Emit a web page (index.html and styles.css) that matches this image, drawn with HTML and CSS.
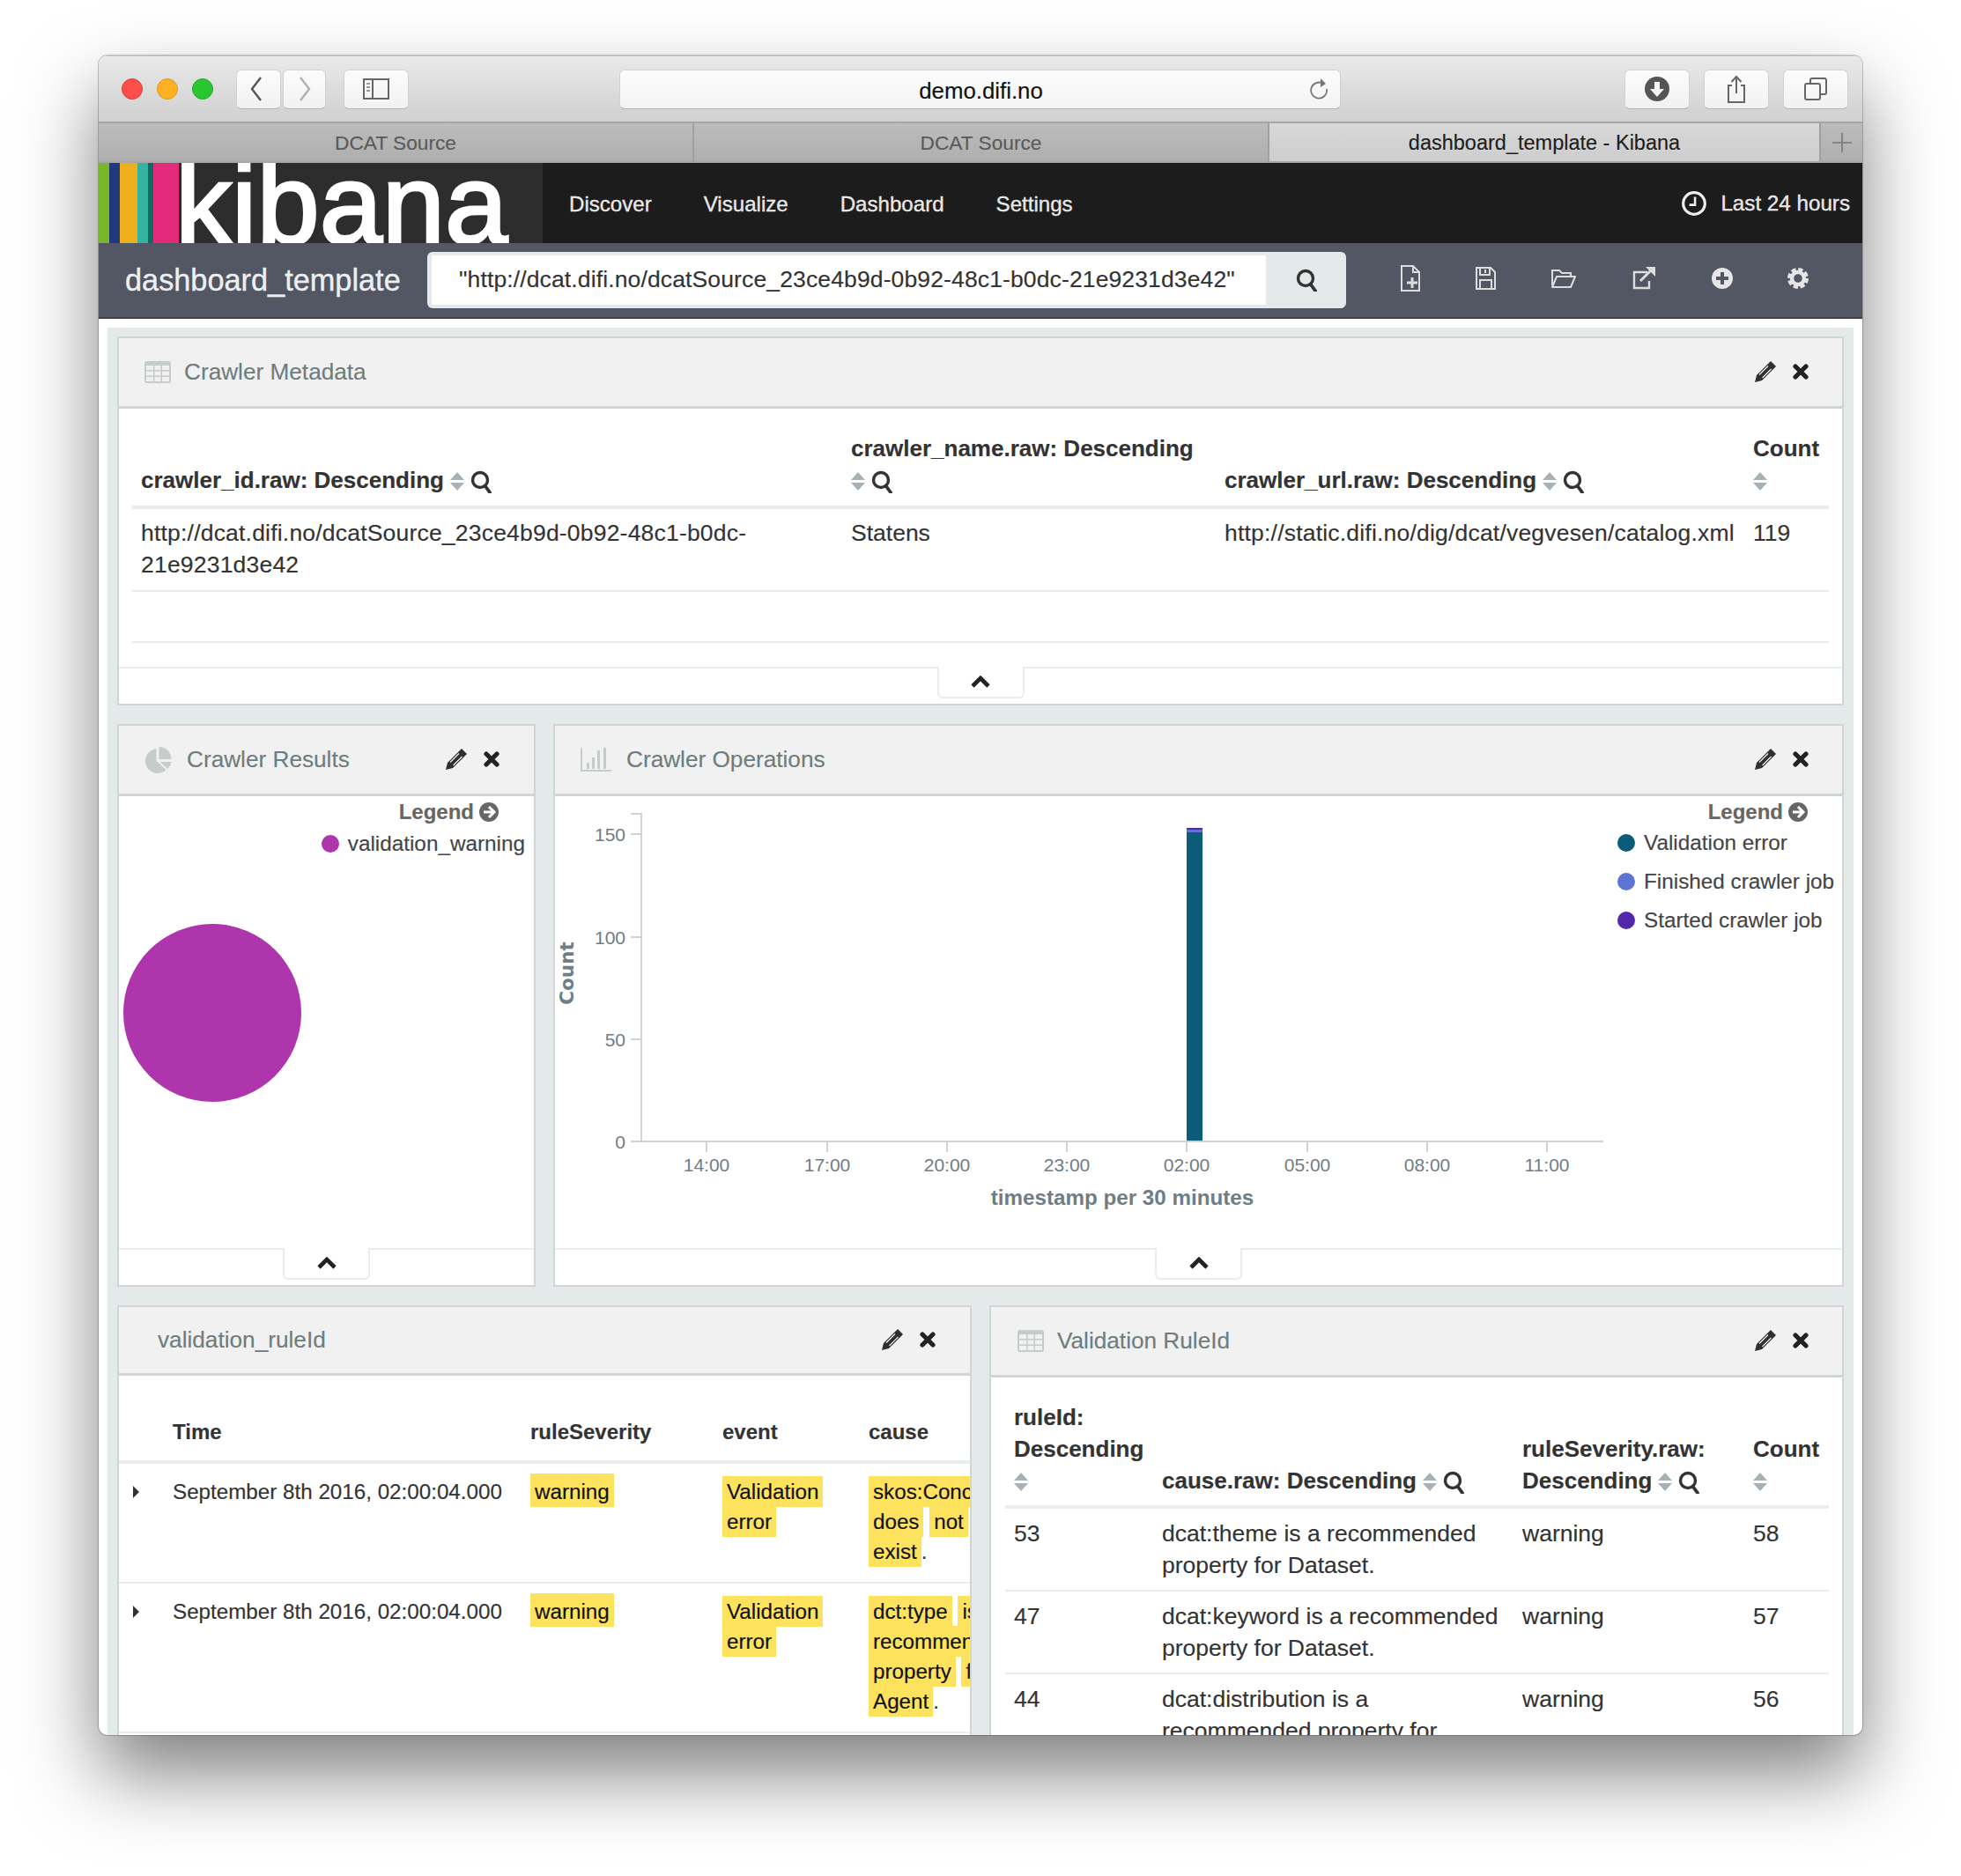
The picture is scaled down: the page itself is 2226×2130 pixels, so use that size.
FILE: index.html
```html
<!DOCTYPE html>
<html lang="en">
<head>
    <meta charset="UTF-8">
    <title>dashboard_template - Kibana</title>
    <link rel="stylesheet" href="styles.css">
</head>
<body>
    <svg class="defs" width="0" height="0">
        <symbol id="i-search" viewBox="0 0 24 26"><circle cx="11" cy="11" r="8.5" fill="none" stroke="currentColor" stroke-width="3.4"/><path d="M16.5 17.5 L22 25" stroke="currentColor" stroke-width="3.8" stroke-linecap="round"/></symbol>
        <symbol id="i-sort" viewBox="0 0 16 21"><path d="M8 0 L16 9 H0z M0 12 H16 L8 21z" fill="#a8b2b6"/></symbol>
        <symbol id="i-pencil" viewBox="0 0 24 24"><path d="M18 0 L24 6 L8 22 L0 24 L2 16z" fill="#2f2f2f"/><path d="M15 5.5 L5 15.5 M18.5 9 L8.5 19" stroke="#f1f1f1" stroke-width="1.2"/></symbol>
        <symbol id="i-times" viewBox="0 0 18 18"><path d="M3 3 L15 15 M15 3 L3 15" stroke="#222" stroke-width="5.2" stroke-linecap="round"/></symbol>
        <symbol id="i-table" viewBox="0 0 30 25"><rect width="30" height="25" rx="2.5" fill="#c6cbcb"/><path d="M2 5h8v5H2z M11.5 5h7v5h-7z M20 5h8v5h-8z M2 11.5h8v5H2z M11.5 11.5h7v5h-7z M20 11.5h8v5h-8z M2 18h8v5H2z M11.5 18h7v5h-7z M20 18h8v5h-8z" fill="#f1f1f1"/></symbol>
        <symbol id="i-pie" viewBox="0 0 30 30"><path d="M13 2 V16 L24 26 A14 14 0 1 1 13 2z" fill="#c6cbcb"/><path d="M16 0 A14 14 0 0 1 30 14 H16z M17 17 H30 A14 14 0 0 1 26 25z" fill="#c6cbcb"/></symbol>
        <symbol id="i-bars" viewBox="0 0 35 27"><path d="M0 0h2v25h33v2H0z" fill="#c6cbcb"/><path d="M7 17h3v7H7z M13 11h3v13h-3z M19 3h3v21h-3z M26 0h3v24h-3z" fill="#c6cbcb"/></symbol>
        <symbol id="i-chevron" viewBox="0 0 24 15"><path d="M3 12 L12 3 L21 12" fill="none" stroke="#222" stroke-width="4.6"/></symbol>
        <symbol id="i-arrow" viewBox="0 0 22 22"><circle cx="11" cy="11" r="11" fill="#666"/><path d="M11 5 L17 11 L11 17 M5 11 H16" fill="none" stroke="#fff" stroke-width="3"/></symbol>
    </svg>

    <div class="window">
        <div class="toolbar">
            <span class="light light-red"></span>
            <span class="light light-yellow"></span>
            <span class="light light-green"></span>
            <div class="btn btn-back">
                <svg width="16" height="30" viewBox="0 0 16 30"><path d="M13 2 L3 15 L13 28" fill="none" stroke="#555" stroke-width="2.4"/></svg>
            </div>
            <div class="btn btn-forward">
                <svg width="16" height="30" viewBox="0 0 16 30"><path d="M3 2 L13 15 L3 28" fill="none" stroke="#b0b0b0" stroke-width="2.4"/></svg>
            </div>
            <div class="btn btn-side">
                <svg width="30" height="24" viewBox="0 0 30 24"><rect x="1" y="1" width="28" height="22" fill="none" stroke="#666" stroke-width="2"/><path d="M11 1 V23" stroke="#666" stroke-width="2"/><path d="M4 6h4 M4 10h4 M4 14h4" stroke="#999" stroke-width="2"/></svg>
            </div>
            <div class="urlbar">
                <span class="url">demo.difi.no</span>
                <svg class="reload" width="22" height="28" viewBox="0 0 22 28"><path d="M15 7 A9 9 0 1 0 19 13" fill="none" stroke="#777" stroke-width="1.8"/><path d="M12 1 L18 7 L12 11z" fill="#777"/></svg>
            </div>
            <div class="btn btn-right">
                <svg width="28" height="28" viewBox="0 0 28 28"><circle cx="14" cy="14" r="14" fill="#555"/><path d="M11 6h6v8h5l-8 9-8-9h5z" fill="#f4f4f4"/></svg>
            </div>
            <div class="btn btn-right">
                <svg width="24" height="32" viewBox="0 0 24 32"><path d="M7 12H3V31H21V12H17" fill="none" stroke="#666" stroke-width="2"/><path d="M12 2V21 M6.5 8 L12 2 L17.5 8" fill="none" stroke="#666" stroke-width="2"/></svg>
            </div>
            <div class="btn btn-right">
                <svg width="26" height="26" viewBox="0 0 26 26"><rect x="1" y="7" width="17" height="18" rx="2" fill="none" stroke="#666" stroke-width="2"/><path d="M7 7V3a2 2 0 0 1 2-2h14a2 2 0 0 1 2 2v14a2 2 0 0 1-2 2h-5" fill="none" stroke="#666" stroke-width="2"/></svg>
            </div>
        </div>

        <div class="tabs">
            <div class="tab tab-1">DCAT Source</div>
            <div class="tab tab-2">DCAT Source</div>
            <div class="tab tab-3 tab-active">dashboard_template - Kibana</div>
            <div class="tab-new">
                <svg width="24" height="24" viewBox="0 0 24 24"><path d="M12 1V23 M1 12H23" stroke="#777" stroke-width="1.6"/></svg>
            </div>
        </div>

        <header class="kbn-header">
            <div class="logo">
                <span class="stripe s-green"></span>
                <span class="stripe s-navy"></span>
                <span class="stripe s-orange"></span>
                <span class="stripe s-teal"></span>
                <span class="stripe s-dark"></span>
                <span class="stripe s-pink"></span>
                <span class="logo-text">kibana</span>
            </div>
            <nav class="nav">
                <a>Discover</a>
                <a>Visualize</a>
                <a>Dashboard</a>
                <a>Settings</a>
            </nav>
            <div class="timepicker">
                <svg width="30" height="30" viewBox="0 0 28 28"><circle cx="14" cy="14" r="11.5" fill="none" stroke="#eee" stroke-width="3"/><path d="M15 7V15.5H9" fill="none" stroke="#eee" stroke-width="2.4"/></svg>
                <span>Last 24 hours</span>
            </div>
        </header>

        <div class="subbar">
            <div class="dash-title">dashboard_template</div>
            <div class="searchbox">
                <div class="searchinput">"http://dcat.difi.no/dcatSource_23ce4b9d-0b92-48c1-b0dc-21e9231d3e42"</div>
                <div class="searchbtn"><svg width="24" height="26"><use href="#i-search"/></svg></div>
            </div>
            <div class="subicons">
                <span class="subicon"><svg width="24" height="30" viewBox="0 0 24 30"><path d="M2 1H15L22 8V29H2z M15 1V8H22" fill="none" stroke="#ddd" stroke-width="2"/><path d="M14 14V26 M8 20H20" stroke="#ddd" stroke-width="3"/></svg></span>
                <span class="subicon"><svg width="24" height="26" viewBox="0 0 24 26"><path d="M2 1H18L23 6V25H2z" fill="none" stroke="#ddd" stroke-width="2"/><path d="M6 1V9H17V1 M12 3V7" fill="none" stroke="#ddd" stroke-width="2"/><path d="M6 25V15H19V25" fill="none" stroke="#ddd" stroke-width="2"/></svg></span>
                <span class="subicon"><svg width="30" height="24" viewBox="0 0 30 24"><path d="M2 20V3H10L13 6H23V10" fill="none" stroke="#ddd" stroke-width="2"/><path d="M2 22H23L28 10H7z" fill="none" stroke="#ddd" stroke-width="2" stroke-linejoin="round"/></svg></span>
                <span class="subicon"><svg width="28" height="28" viewBox="0 0 28 28"><path d="M18 7H3V25H20V17" fill="none" stroke="#ddd" stroke-width="2.4"/><path d="M10 17L22 5" stroke="#ddd" stroke-width="3"/><path d="M16 1H27V12z" fill="#ddd"/></svg></span>
                <span class="subicon"><svg width="24" height="24" viewBox="0 0 24 24"><circle cx="12" cy="12" r="12" fill="#e6e6e6"/><path d="M12 5V19 M5 12H19" stroke="#535663" stroke-width="4"/></svg></span>
                <span class="subicon"><svg width="24" height="24" viewBox="0 0 24 24"><circle cx="12" cy="12" r="7" fill="none" stroke="#e6e6e6" stroke-width="4.4"/><circle cx="12" cy="12" r="10" fill="none" stroke="#e6e6e6" stroke-width="4" stroke-dasharray="5.2 2.65"/></svg></span>
            </div>
        </div>

        <main class="dashboard">
            <section class="panel panel-meta">
                <div class="panel-head">
                    <svg class="head-icon" width="30" height="25"><use href="#i-table"/></svg>
                    <span class="panel-title">Crawler Metadata</span>
                    <span class="panel-actions">
                        <svg width="24" height="24"><use href="#i-pencil"/></svg>
                        <svg width="18" height="18"><use href="#i-times"/></svg>
                    </span>
                </div>
                <table class="tbl tbl-meta">
                    <colgroup>
                        <col class="m-1"><col class="m-2"><col class="m-3"><col class="m-4">
                    </colgroup>
                    <thead>
                        <tr>
                            <th>crawler_id.raw: Descending<svg class="sort" width="16" height="21"><use href="#i-sort"/></svg><svg class="q" width="24" height="26"><use href="#i-search"/></svg></th>
                            <th>crawler_name.raw: Descending<br><svg class="sort first" width="16" height="21"><use href="#i-sort"/></svg><svg class="q" width="24" height="26"><use href="#i-search"/></svg></th>
                            <th>crawler_url.raw: Descending<svg class="sort" width="16" height="21"><use href="#i-sort"/></svg><svg class="q" width="24" height="26"><use href="#i-search"/></svg></th>
                            <th>Count<br><svg class="sort first" width="16" height="21"><use href="#i-sort"/></svg></th>
                        </tr>
                    </thead>
                    <tbody>
                        <tr>
                            <td class="link-cell">http://dcat.difi.no/dcatSource_23ce4b9d-0b92-48c1-b0dc-21e9231d3e42</td>
                            <td>Statens</td>
                            <td class="link-cell">http://static.difi.no/dig/dcat/vegvesen/catalog.xml</td>
                            <td>119</td>
                        </tr>
                        <tr class="empty"><td colspan="4">&nbsp;</td></tr>
                    </tbody>
                </table>
                <div class="panel-foot"><div class="foot-tab"><svg width="24" height="15"><use href="#i-chevron"/></svg></div></div>
            </section>

            <div class="row row-charts">
                <section class="panel">
                    <div class="panel-head">
                        <svg class="head-icon" width="31" height="30"><use href="#i-pie"/></svg>
                        <span class="panel-title">Crawler Results</span>
                        <span class="panel-actions">
                            <svg width="24" height="24"><use href="#i-pencil"/></svg>
                            <svg width="18" height="18"><use href="#i-times"/></svg>
                        </span>
                    </div>
                    <div class="pie-body">
                        <div class="legend-title">Legend<svg width="22" height="22"><use href="#i-arrow"/></svg></div>
                        <div class="legend-item legend-single"><i class="dot dot-pie"></i>validation_warning</div>
                        <div class="pie"></div>
                    </div>
                    <div class="panel-foot"><div class="foot-tab"><svg width="24" height="15"><use href="#i-chevron"/></svg></div></div>
                </section>

                <section class="panel">
                    <div class="panel-head">
                        <svg class="head-icon" width="35" height="27"><use href="#i-bars"/></svg>
                        <span class="panel-title">Crawler Operations</span>
                        <span class="panel-actions">
                            <svg width="24" height="24"><use href="#i-pencil"/></svg>
                            <svg width="18" height="18"><use href="#i-times"/></svg>
                        </span>
                    </div>
                    <div class="chart-body">
                        <svg class="chart" width="1200" height="513" viewBox="630 904 1200 513">
                            <g stroke="#d0d3d4" stroke-width="2" fill="none">
                                <path d="M716 924H728V1296H1820"/>
                                <path d="M716 947H728 M716 1064H728 M716 1180H728 M716 1296H728"/>
                                <path d="M802 1296V1308 M939 1296V1308 M1075 1296V1308 M1211 1296V1308 M1347 1296V1308 M1484 1296V1308 M1620 1296V1308 M1756 1296V1308"/>
                            </g>
                            <rect x="1347" y="945" width="18" height="350" fill="#0a5c78"/>
                            <rect x="1347" y="942" width="18" height="3" fill="#5e74d4"/>
                            <rect x="1347" y="940" width="18" height="2" fill="#5427ab"/>
                            <g class="axis-y">
                                <text x="710" y="955">150</text>
                                <text x="710" y="1072">100</text>
                                <text x="710" y="1188">50</text>
                                <text x="710" y="1304">0</text>
                            </g>
                            <g class="axis-x">
                                <text x="802" y="1330">14:00</text>
                                <text x="939" y="1330">17:00</text>
                                <text x="1075" y="1330">20:00</text>
                                <text x="1211" y="1330">23:00</text>
                                <text x="1347" y="1330">02:00</text>
                                <text x="1484" y="1330">05:00</text>
                                <text x="1620" y="1330">08:00</text>
                                <text x="1756" y="1330">11:00</text>
                            </g>
                            <text class="axis-label" x="1274" y="1368">timestamp per 30 minutes</text>
                            <text class="axis-label count" transform="translate(651 1105) rotate(-90)">Count</text>
                        </svg>
                        <div class="chart-legend">
                            <div class="legend-title">Legend<svg width="22" height="22"><use href="#i-arrow"/></svg></div>
                            <div class="legend-item"><i class="dot dot-a"></i>Validation error</div>
                            <div class="legend-item"><i class="dot dot-b"></i>Finished crawler job</div>
                            <div class="legend-item"><i class="dot dot-c"></i>Started crawler job</div>
                        </div>
                    </div>
                    <div class="panel-foot"><div class="foot-tab"><svg width="24" height="15"><use href="#i-chevron"/></svg></div></div>
                </section>
            </div>

            <div class="row row-tables">
                <section class="panel">
                    <div class="panel-head head-short">
                        <span class="panel-title">validation_ruleId</span>
                        <span class="panel-actions">
                            <svg width="24" height="24"><use href="#i-pencil"/></svg>
                            <svg width="18" height="18"><use href="#i-times"/></svg>
                        </span>
                    </div>
                    <table class="tbl tbl-docs">
                        <colgroup>
                            <col class="d-1"><col class="d-2"><col class="d-3"><col class="d-4"><col class="d-5">
                        </colgroup>
                        <thead>
                            <tr><th></th><th>Time</th><th>ruleSeverity</th><th>event</th><th>cause</th></tr>
                        </thead>
                        <tbody>
                            <tr>
                                <td><i class="caret"></i></td>
                                <td>September 8th 2016, 02:00:04.000</td>
                                <td><mark class="tall">warning</mark></td>
                                <td><mark>Validation</mark><br><mark>error</mark></td>
                                <td class="cause"><mark>skos:Concept</mark><br><mark>does</mark> <mark>not</mark><br><mark>exist</mark>.</td>
                            </tr>
                            <tr>
                                <td><i class="caret"></i></td>
                                <td>September 8th 2016, 02:00:04.000</td>
                                <td><mark class="tall">warning</mark></td>
                                <td><mark>Validation</mark><br><mark>error</mark></td>
                                <td class="cause"><mark>dct:type</mark> <mark>is</mark><br><mark>recommended</mark><br><mark>property</mark> <mark>for</mark><br><mark>Agent</mark>.</td>
                            </tr>
                        </tbody>
                    </table>
                </section>

                <section class="panel">
                    <div class="panel-head head-tall">
                        <svg class="head-icon" width="30" height="25"><use href="#i-table"/></svg>
                        <span class="panel-title">Validation RuleId</span>
                        <span class="panel-actions">
                            <svg width="24" height="24"><use href="#i-pencil"/></svg>
                            <svg width="18" height="18"><use href="#i-times"/></svg>
                        </span>
                    </div>
                    <table class="tbl tbl-rules">
                        <colgroup>
                            <col class="r-1"><col class="r-2"><col class="r-3"><col class="r-4">
                        </colgroup>
                        <thead>
                            <tr>
                                <th>ruleId:<br>Descending<br><svg class="sort first" width="16" height="21"><use href="#i-sort"/></svg></th>
                                <th>cause.raw: Descending<svg class="sort" width="16" height="21"><use href="#i-sort"/></svg><svg class="q" width="24" height="26"><use href="#i-search"/></svg></th>
                                <th>ruleSeverity.raw:<br>Descending<svg class="sort" width="16" height="21"><use href="#i-sort"/></svg><svg class="q" width="24" height="26"><use href="#i-search"/></svg></th>
                                <th>Count<br><svg class="sort first" width="16" height="21"><use href="#i-sort"/></svg></th>
                            </tr>
                        </thead>
                        <tbody>
                            <tr><td>53</td><td>dcat:theme is a recommended property for Dataset.</td><td>warning</td><td>58</td></tr>
                            <tr><td>47</td><td>dcat:keyword is a recommended property for Dataset.</td><td>warning</td><td>57</td></tr>
                            <tr><td>44</td><td>dcat:distribution is a recommended property for Dataset.</td><td>warning</td><td>56</td></tr>
                        </tbody>
                    </table>
                </section>
            </div>
        </main>
    </div>
</body>
</html>
```

FILE: styles.css
```css
html, body {
    margin: 0;
    padding: 0;
    background: #ffffff;
}
body {
    font-family: "Liberation Sans", Arial, sans-serif;
    color: #333333;
    height: 2130px;
    overflow: hidden;
    -webkit-text-stroke: 0.15px;
}
.defs {
    position: absolute;
}
svg {
    display: block;
}

/* browser window */
.window {
    width: 2002px;
    height: 1907px;
    margin: 63px 0 0 112px;
    display: flex;
    flex-direction: column;
    overflow: hidden;
    background: #ffffff;
    border-radius: 10px;
    box-shadow: 0 44px 88px rgba(0, 0, 0, 0.5), 0 0 0 1px rgba(0, 0, 0, 0.22);
}
.toolbar {
    height: 75px;
    flex: none;
    box-sizing: border-box;
    display: flex;
    align-items: center;
    padding: 0 16px 0 26px;
    background: linear-gradient(#e9e9e9, #d0d0d0);
    border-top: 1px solid #c8c8c8;
}
.light {
    width: 24px;
    height: 24px;
    border-radius: 50%;
    margin-right: 16px;
    box-sizing: border-box;
}
.light-red {
    background: #fc4f4a;
    border: 1px solid #df3a35;
}
.light-yellow {
    background: #fdb024;
    border: 1px solid #dd9a1c;
}
.light-green {
    background: #2ac62f;
    border: 1px solid #22a826;
    margin-right: 0;
}
.btn {
    height: 45px;
    box-sizing: border-box;
    display: flex;
    align-items: center;
    justify-content: center;
    background: linear-gradient(#fcfcfc, #f1f1f1);
    border: 1px solid #d2d2d2;
    border-bottom-color: #b4b4b4;
    border-radius: 6px;
}
.btn-back {
    width: 51px;
    margin-left: 26px;
    padding-right: 5px;
}
.btn-forward {
    width: 49px;
    margin-left: 2px;
}
.btn-side {
    width: 74px;
    margin-left: 20px;
}
.btn-right {
    width: 74px;
    margin-left: 16px;
}
.urlbar {
    position: relative;
    width: 819px;
    height: 45px;
    box-sizing: border-box;
    margin-left: 239px;
    margin-right: 306px;
    padding: 4px 0 0 2px;
    display: flex;
    align-items: center;
    justify-content: center;
    background: linear-gradient(#fcfcfc, #f3f3f3);
    border: 1px solid #d2d2d2;
    border-bottom-color: #b4b4b4;
    border-radius: 6px;
}
.url {
    font-size: 25.8px;
    color: #111111;
}
.reload {
    position: absolute;
    right: 12px;
    top: 8px;
}
.tabs {
    height: 47px;
    flex: none;
    box-sizing: border-box;
    display: flex;
    border-top: 2px solid #a6a6a6;
    border-bottom: 2px solid #a6a6a6;
    background: linear-gradient(#bcbcbc, #aeaeae);
    font-size: 22.7px;
}
.tab {
    display: flex;
    align-items: center;
    justify-content: center;
    padding-top: 2px;
    color: #5a5a5a;
    box-sizing: border-box;
}
.tab-1 {
    width: 676px;
    border-right: 2px solid #a0a0a0;
}
.tab-2 {
    width: 651px;
}
.tab-3 {
    width: 628px;
}
.tab-active {
    color: #1d1d1d;
    font-size: 23.5px;
    background: linear-gradient(#d8d8d8, #cdcdcd);
    border-left: 2px solid #a0a0a0;
    border-right: 2px solid #a0a0a0;
}
.tab-new {
    flex: 1;
    display: flex;
    align-items: center;
    justify-content: center;
}

/* kibana chrome */
.kbn-header {
    height: 91px;
    flex: none;
    display: flex;
    align-items: center;
    background: #1c1c1c;
}
.logo {
    width: 504px;
    height: 91px;
    flex: none;
    display: flex;
    overflow: hidden;
    background: #2d2d2d;
}
.stripe {
    flex: none;
    height: 100%;
}
.s-green { width: 12px; background: #76b82a; }
.s-navy { width: 12px; background: #22397d; }
.s-orange { width: 20px; background: #edb01c; }
.s-teal { width: 12px; background: #35b3a0; }
.s-dark { width: 6px; background: #0f6a60; }
.s-pink { width: 29px; background: #e32a7b; }
.logo-text {
    font-size: 128px;
    line-height: 94px;
    color: #ffffff;
    -webkit-text-stroke: 3px #ffffff;
    margin-left: -4px;
}
.nav {
    display: flex;
    gap: 59px;
    margin-left: 30px;
    padding-top: 2px;
    font-size: 24.1px;
    color: #e8e8e8;
    -webkit-text-stroke: 0.35px;
}
.timepicker {
    margin-left: auto;
    padding-right: 14px;
    display: flex;
    align-items: center;
    gap: 15px;
    font-size: 24.2px;
    color: #e8e8e8;
    -webkit-text-stroke: 0.35px;
}
.subbar {
    height: 86px;
    flex: none;
    box-sizing: border-box;
    display: flex;
    align-items: center;
    background: #535663;
    border-bottom: 2px solid #3e4049;
    padding-left: 30px;
}
.dash-title {
    width: 313px;
    flex: none;
    font-size: 34.3px;
    color: #ecf0f1;
    white-space: nowrap;
    -webkit-text-stroke: 0.35px;
}
.searchbox {
    width: 1043px;
    height: 64px;
    flex: none;
    margin-left: 30px;
    box-sizing: border-box;
    display: flex;
    padding: 4px 0 4px 5px;
    background: #e4e9e9;
    border-radius: 6px;
}
.searchinput {
    width: 947px;
    flex: none;
    box-sizing: border-box;
    padding: 1px 0 0 31px;
    background: #ffffff;
    font-size: 26.5px;
    letter-spacing: 0.13px;
    line-height: 52px;
    color: #333333;
    white-space: nowrap;
}
.searchbtn {
    flex: 1;
    display: flex;
    align-items: center;
    justify-content: center;
    color: #333333;
}
.subicons {
    display: flex;
    align-items: center;
    margin-top: -4px;
}
.subicon {
    width: 30px;
    display: flex;
    justify-content: center;
}
.subicon:nth-child(1) { margin-left: 58px; }
.subicon:nth-child(2) { margin-left: 55px; }
.subicon:nth-child(3) { margin-left: 59px; }
.subicon:nth-child(4) { margin-left: 61px; }
.subicon:nth-child(5) { margin-left: 59px; }
.subicon:nth-child(6) { margin-left: 56px; }

/* panels */
.dashboard {
    flex: 1;
    min-height: 0;
    margin: 10px 10px 0;
    padding: 10px 11px 0;
    display: flex;
    flex-direction: column;
    gap: 21px;
    background: #e4e9e9;
}
.row {
    display: grid;
    gap: 20px;
    flex: none;
}
.row-charts {
    grid-template-columns: 475px 1465px;
    height: 639px;
}
.row-tables {
    grid-template-columns: 970px 970px;
    height: 600px;
}
.panel {
    box-sizing: border-box;
    min-width: 0;
    display: flex;
    flex-direction: column;
    overflow: hidden;
    background: #ffffff;
    border: 2px solid #d2d5d5;
}
.panel-meta {
    height: 419px;
    flex: none;
}
.panel-head {
    height: 80px;
    flex: none;
    box-sizing: border-box;
    display: flex;
    align-items: center;
    padding: 0 38px 0 29px;
    background: #f1f1f1;
    border-bottom: 3px solid #d2d5d5;
}
.head-short {
    height: 78px;
    padding-left: 44px;
}
.head-tall {
    height: 80px;
    padding-left: 30px;
}
.head-icon {
    margin-right: 15px;
    flex: none;
}
.row-charts .head-icon {
    margin-right: 17px;
}
.panel-title {
    font-size: 26.2px;
    color: #6f7d7d;
}
.panel-actions {
    margin-left: auto;
    margin-top: -2px;
    display: flex;
    align-items: center;
    gap: 19px;
}
.row > .panel:first-child .panel-actions {
    margin-right: 1px;
}
.panel-foot {
    margin-top: auto;
    height: 42px;
    flex: none;
    box-sizing: border-box;
    display: flex;
    justify-content: center;
    border-top: 2px solid #e8eded;
}
.foot-tab {
    width: 99px;
    height: 36px;
    box-sizing: border-box;
    display: flex;
    align-items: center;
    justify-content: center;
    margin-top: -2px;
    background: #ffffff;
    border: 2px solid #e8eded;
    border-top: none;
    border-radius: 0 0 6px 6px;
}

/* tables */
.tbl {
    table-layout: fixed;
    border-collapse: collapse;
    font-size: 26.5px;
    line-height: 36px;
    color: #333333;
}
.tbl th {
    font-size: 26px;
    font-weight: bold;
    text-align: left;
    vertical-align: bottom;
    white-space: nowrap;
    padding: 0 10px 10px;
    border-bottom: 4px solid #e8eded;
}
.tbl td {
    vertical-align: top;
    padding: 10px;
    border-bottom: 2px solid #e8eded;
}
.sort {
    display: inline-block;
    vertical-align: -3px;
    margin-left: 7px;
}
.sort.first {
    margin-left: 0;
}
.q {
    display: inline-block;
    vertical-align: -6px;
    margin-left: 7px;
}
.tbl-meta {
    width: 1926px;
    margin: 0 15px;
}
.tbl-meta thead th {
    padding-top: 27px;
    padding-bottom: 11px;
}
.tbl-meta td {
    padding-top: 9px;
    padding-bottom: 11px;
}
.tbl td.link-cell {
    letter-spacing: 0.2px;
}
.m-1 { width: 806px; }
.m-2 { width: 424px; }
.m-3 { width: 600px; }
.m-4 { width: 96px; }

.tbl-docs {
    width: 966px;
    font-size: 24.2px;
    line-height: 34px;
}
.tbl-docs th {
    font-size: 24px;
    padding-top: 46px;
    line-height: 36px;
    padding-bottom: 14px;
}
.tbl-docs td {
    padding-top: 15px;
    padding-bottom: 17px;
}
.d-1 { width: 51px; }
.d-2 { width: 406px; }
.d-3 { width: 218px; }
.d-4 { width: 166px; }
.d-5 { width: 125px; }
.tbl-docs td.cause {
    white-space: nowrap;
}
.caret {
    display: block;
    width: 0;
    height: 0;
    margin: 10px 0 0 6px;
    border-left: 7px solid #333333;
    border-top: 7px solid transparent;
    border-bottom: 7px solid transparent;
}
mark {
    padding: 4px 5px;
    background: #fde25e;
    color: #111111;
}
mark.tall {
    padding-top: 7px;
}
.tbl-rules {
    width: 935px;
    margin: 0 16px;
}
.tbl-rules thead th {
    padding-top: 27px;
}
.r-1 { width: 168px; }
.r-2 { width: 409px; }
.r-3 { width: 262px; }
.r-4 { width: 96px; }

/* charts */
.pie-body {
    flex: 1;
    display: flex;
    flex-direction: column;
    align-items: flex-end;
    min-height: 0;
}
.legend-title {
    height: 36px;
    display: flex;
    align-items: center;
    gap: 6px;
    padding-right: 40px;
    font-size: 24px;
    font-weight: bold;
    color: #666666;
}
.legend-item {
    height: 44px;
    display: flex;
    align-items: center;
    font-size: 24.3px;
    color: #444444;
    white-space: nowrap;
}
.legend-single {
    padding-right: 10px;
    height: 36px;
}
.dot {
    width: 20px;
    height: 20px;
    border-radius: 50%;
    margin-right: 10px;
    flex: none;
}
.dot-pie { background: #ae35ab; }
.dot-a { background: #0a5c78; }
.dot-b { background: #5e74d4; }
.dot-c { background: #5427ab; }
.pie {
    align-self: flex-start;
    width: 202px;
    height: 202px;
    margin: 73px 0 0 5px;
    border-radius: 50%;
    background: #ae35ab;
}
.chart-body {
    flex: 1;
    display: flex;
    min-height: 0;
}
.chart {
    flex: none;
}
.chart text {
    font-family: "Liberation Sans", Arial, sans-serif;
}
.axis-y text {
    font-size: 21px;
    fill: #6f7d86;
    text-anchor: end;
}
.axis-x text {
    font-size: 21px;
    fill: #6f7d86;
    text-anchor: middle;
}
.axis-label {
    font-size: 24.2px;
    font-weight: bold;
    fill: #6f7d86;
    text-anchor: middle;
}
.chart .axis-label.count {
    font-family: "DejaVu Sans", sans-serif;
    font-size: 21.5px;
}
.chart-legend {
    flex: 1;
    display: flex;
    flex-direction: column;
    padding-left: 6px;
}
.chart-legend .legend-title {
    align-self: flex-end;
    padding-right: 39px;
    margin-bottom: -5px;
}
```
